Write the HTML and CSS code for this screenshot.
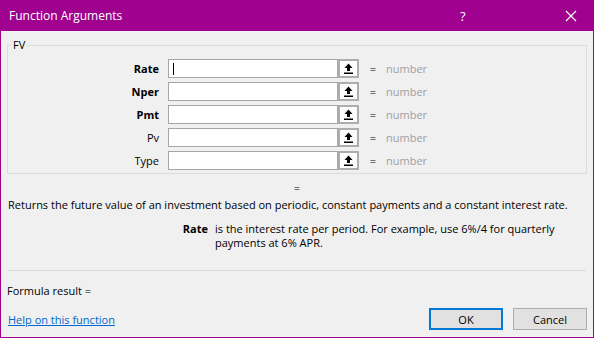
FILE: index.html
```html
<!DOCTYPE html>
<html lang="en">
<head>
  <meta charset="UTF-8">
  <title>Function Arguments</title>
  <link rel="stylesheet" href="styles.css">
</head>
<body>
  <div class="window">
    <div class="titlebar">
      <span class="title">Function Arguments</span>
      <span class="help">?</span>
      <span class="close">
        <svg width="12" height="12" viewBox="0 0 12 12"><path d="M1 1 L11 11 M11 1 L1 11" stroke="#fff" stroke-width="1.2" fill="none"/></svg>
      </span>
    </div>

    <div class="content">
      <fieldset class="group">
        <legend>FV</legend>
        <div class="args">
          <label class="req">Rate</label>
          <div class="field"><span class="caret"></span></div>
          <button class="collapse"><svg width="9" height="11" viewBox="0 0 9 11"><path d="M4.5 0.5 L8.5 5 L6 5 L6 8 L3 8 L3 5 L0.5 5 Z" fill="#000"/><rect x="0" y="9.5" width="9" height="1.5" fill="#000"/></svg></button>
          <span class="eq">=</span>
          <span class="val">number</span>

          <label class="req">Nper</label>
          <div class="field"></div>
          <button class="collapse"><svg width="9" height="11" viewBox="0 0 9 11"><path d="M4.5 0.5 L8.5 5 L6 5 L6 8 L3 8 L3 5 L0.5 5 Z" fill="#000"/><rect x="0" y="9.5" width="9" height="1.5" fill="#000"/></svg></button>
          <span class="eq">=</span>
          <span class="val">number</span>

          <label class="req">Pmt</label>
          <div class="field"></div>
          <button class="collapse"><svg width="9" height="11" viewBox="0 0 9 11"><path d="M4.5 0.5 L8.5 5 L6 5 L6 8 L3 8 L3 5 L0.5 5 Z" fill="#000"/><rect x="0" y="9.5" width="9" height="1.5" fill="#000"/></svg></button>
          <span class="eq">=</span>
          <span class="val">number</span>

          <label>Pv</label>
          <div class="field"></div>
          <button class="collapse"><svg width="9" height="11" viewBox="0 0 9 11"><path d="M4.5 0.5 L8.5 5 L6 5 L6 8 L3 8 L3 5 L0.5 5 Z" fill="#000"/><rect x="0" y="9.5" width="9" height="1.5" fill="#000"/></svg></button>
          <span class="eq">=</span>
          <span class="val">number</span>

          <label>Type</label>
          <div class="field"></div>
          <button class="collapse"><svg width="9" height="11" viewBox="0 0 9 11"><path d="M4.5 0.5 L8.5 5 L6 5 L6 8 L3 8 L3 5 L0.5 5 Z" fill="#000"/><rect x="0" y="9.5" width="9" height="1.5" fill="#000"/></svg></button>
          <span class="eq">=</span>
          <span class="val">number</span>
        </div>
      </fieldset>

      <div class="result-eq">=</div>
      <p class="desc">Returns the future value of an investment based on periodic, constant payments and a constant interest rate.</p>

      <div class="argdesc">
        <span class="argname">Rate</span>
        <span class="argtext">is the interest rate per period. For example, use 6%/4 for quarterly payments at 6% APR.</span>
      </div>

      <div class="sep"></div>

      <div class="formula">Formula result =</div>

      <div class="footer">
        <a href="#" class="helplink">Help on this function</a>
        <div class="buttons">
          <button class="btn btn-default">OK</button>
          <button class="btn">Cancel</button>
        </div>
      </div>
    </div>
  </div>
</body>
</html>
```

FILE: styles.css
```css
body {
  margin: 0;
  font-family: 'Open Sans', 'Noto Sans', sans-serif;
  font-size: 11px;
  color: #000;
  background: #f0f0f0;
}

.window {
  width: 594px;
  height: 338px;
  box-sizing: border-box;
  border: 1px solid #a0018e;
  border-top: none;
  background: #f0f0f0;
  display: flex;
  flex-direction: column;
}

.titlebar {
  height: 31px;
  background: #a0018e;
  color: #fff;
  display: flex;
  align-items: center;
  margin: 0 -1px;
  padding: 0 0 0 9px;
}
.title {
  font-size: 12px;
  flex: 1;
}
.help {
  font-size: 13px;
  width: 20px;
  margin-right: 85px;
}
.close {
  width: 29px;
  display: flex;
}

.content {
  padding: 0 6px 0 6px;
  flex: 1;
  display: flex;
  flex-direction: column;
}

/* Argument group */
.group {
  margin: 7px 0 0 0;
  padding: 0 0 3px 0;
  border: 1px solid #dcdcdc;
}
.group legend {
  margin-left: 3px;
  padding: 0 2px;
  font-size: 11px;
  line-height: 14px;
}

.args {
  display: grid;
  grid-template-columns: 160px 170px 21px 22px auto;
  grid-auto-rows: 19px;
  row-gap: 4px;
  align-items: center;
  margin-top: 7px;
}
.args label {
  text-align: right;
  padding-right: 9px;
}
.args label.req {
  font-weight: bold;
}
.field {
  height: 19px;
  box-sizing: border-box;
  border: 1px solid #a6a6a6;
  background: #fff;
  position: relative;
}
.caret {
  position: absolute;
  left: 4px;
  top: 3px;
  width: 1px;
  height: 12px;
  background: #000;
}
.collapse {
  height: 19px;
  width: 21px;
  box-sizing: border-box;
  padding: 0;
  border: 2px solid #adadad;
  background: #fcfcfc;
  display: flex;
  align-items: center;
  justify-content: center;
}
.eq {
  text-align: center;
  padding-left: 6px;
}
.val {
  color: #a0a0a0;
  padding-left: 5px;
}

/* Description */
.result-eq {
  text-align: center;
  margin: 6px 0 0 0;
  line-height: 15px;
}
.desc {
  margin: 2px 0 0 1px;
  line-height: 15px;
}
.argdesc {
  display: flex;
  margin-top: 10px;
  line-height: 14px;
}
.argname {
  width: 201px;
  text-align: right;
  font-weight: bold;
  flex: none;
}
.argtext {
  padding-left: 7px;
  width: 345px;
}

.sep {
  margin-top: 20px;
  height: 1px;
  background: #dcdcdc;
  margin-right: 1px;
  margin-left: 1px;
}

.formula {
  margin-top: 12px;
  line-height: 15px;
}

.footer {
  display: flex;
  align-items: center;
  justify-content: space-between;
  margin-top: 10px;
}
.helplink {
  color: #0066cc;
  text-decoration: underline;
  margin-left: 1px;
}
.buttons {
  display: flex;
  gap: 10px;
}
.btn {
  width: 74px;
  height: 22px;
  box-sizing: border-box;
  border: 1px solid #adadad;
  background: #e1e1e1;
  font-family: inherit;
  font-size: 11px;
  padding: 0;
}
.btn-default {
  border: 2px solid #0078d7;
}
```
